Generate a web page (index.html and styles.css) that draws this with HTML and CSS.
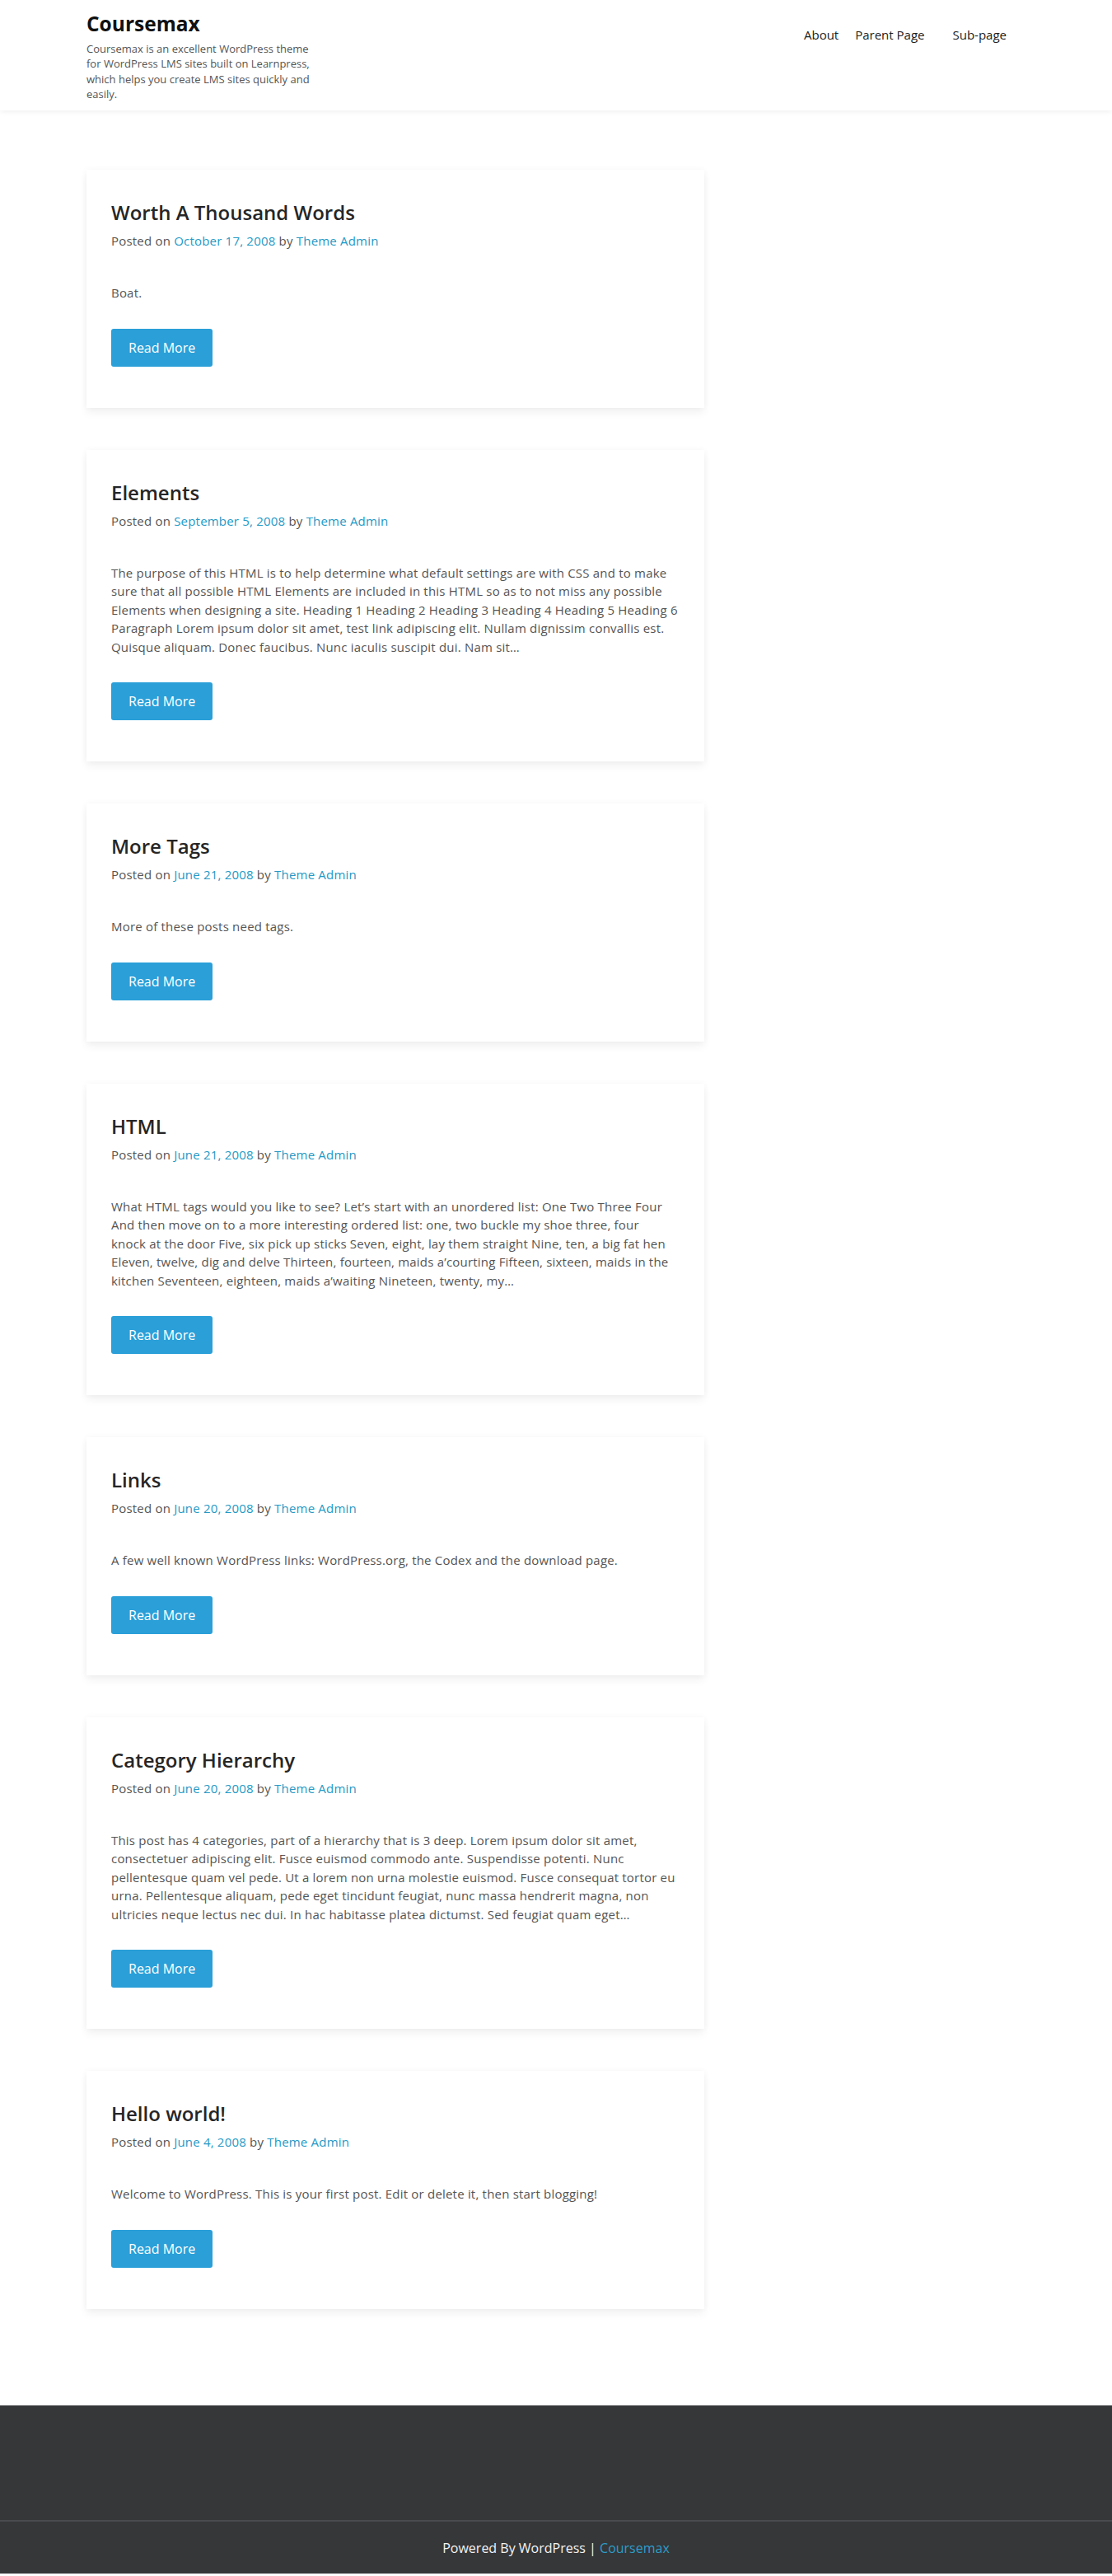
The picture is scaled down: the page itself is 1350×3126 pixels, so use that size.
FILE: index.html
```html
<!DOCTYPE html>
<html lang="en">
<head>
<meta charset="utf-8">
<title>Coursemax</title>
<link rel="stylesheet" href="styles.css">
</head>
<body>
<header class="site-header">
  <div class="container header-inner">
    <div class="branding">
      <h1 class="site-title"><a href="#">Coursemax</a></h1>
      <p class="site-desc">Coursemax is an excellent WordPress theme for WordPress LMS sites built on Learnpress, which helps you create LMS sites quickly and easily.</p>
    </div>
    <nav class="main-nav">
      <ul>
        <li><a href="#">About</a></li>
        <li class="has-sub"><a href="#">Parent Page</a></li>
        <li><a href="#">Sub-page</a></li>
      </ul>
    </nav>
  </div>
</header>

<main class="site-main">
  <div class="container">
    <div class="posts">
      <article class="post-card">
        <h2 class="post-title">Worth A Thousand Words</h2>
        <div class="post-meta">Posted on <a href="#">October 17, 2008</a> by <a href="#">Theme Admin</a></div>
        <p class="post-excerpt">Boat.</p>
        <a class="read-more" href="#">Read More</a>
      </article>

      <article class="post-card">
        <h2 class="post-title">Elements</h2>
        <div class="post-meta">Posted on <a href="#">September 5, 2008</a> by <a href="#">Theme Admin</a></div>
        <p class="post-excerpt">The purpose of this HTML is to help determine what default settings are with CSS and to make sure that all possible HTML Elements are included in this HTML so as to not miss any possible Elements when designing a site. Heading 1 Heading 2 Heading 3 Heading 4 Heading 5 Heading 6 Paragraph Lorem ipsum dolor sit amet, test link adipiscing elit. Nullam dignissim convallis est. Quisque aliquam. Donec faucibus. Nunc iaculis suscipit dui. Nam sit…</p>
        <a class="read-more" href="#">Read More</a>
      </article>

      <article class="post-card">
        <h2 class="post-title">More Tags</h2>
        <div class="post-meta">Posted on <a href="#">June 21, 2008</a> by <a href="#">Theme Admin</a></div>
        <p class="post-excerpt">More of these posts need tags.</p>
        <a class="read-more" href="#">Read More</a>
      </article>

      <article class="post-card">
        <h2 class="post-title">HTML</h2>
        <div class="post-meta">Posted on <a href="#">June 21, 2008</a> by <a href="#">Theme Admin</a></div>
        <p class="post-excerpt">What HTML tags would you like to see? Let’s start with an unordered list: One Two Three Four And then move on to a more interesting ordered list: one, two buckle my shoe three, four<br>knock at the door Five, six pick up sticks Seven, eight, lay them straight Nine, ten, a big fat hen Eleven, twelve, dig and delve Thirteen, fourteen, maids a’courting Fifteen, sixteen, maids in the kitchen Seventeen, eighteen, maids a’waiting Nineteen, twenty, my…</p>
        <a class="read-more" href="#">Read More</a>
      </article>

      <article class="post-card">
        <h2 class="post-title">Links</h2>
        <div class="post-meta">Posted on <a href="#">June 20, 2008</a> by <a href="#">Theme Admin</a></div>
        <p class="post-excerpt">A few well known WordPress links: WordPress.org, the Codex and the download page.</p>
        <a class="read-more" href="#">Read More</a>
      </article>

      <article class="post-card">
        <h2 class="post-title">Category Hierarchy</h2>
        <div class="post-meta">Posted on <a href="#">June 20, 2008</a> by <a href="#">Theme Admin</a></div>
        <p class="post-excerpt">This post has 4 categories, part of a hierarchy that is 3 deep. Lorem ipsum dolor sit amet, consectetuer adipiscing elit. Fusce euismod commodo ante. Suspendisse potenti. Nunc pellentesque quam vel pede. Ut a lorem non urna molestie euismod. Fusce consequat tortor eu urna. Pellentesque aliquam, pede eget tincidunt feugiat, nunc massa hendrerit magna, non ultricies neque lectus nec dui. In hac habitasse platea dictumst. Sed feugiat quam eget…</p>
        <a class="read-more" href="#">Read More</a>
      </article>

      <article class="post-card">
        <h2 class="post-title">Hello world!</h2>
        <div class="post-meta">Posted on <a href="#">June 4, 2008</a> by <a href="#">Theme Admin</a></div>
        <p class="post-excerpt">Welcome to WordPress. This is your first post. Edit or delete it, then start blogging!</p>
        <a class="read-more" href="#">Read More</a>
      </article>
    </div>
  </div>
</main>

<footer class="site-footer">
  <div class="footer-widgets"></div>
  <div class="footer-bottom">
    <p>Powered By WordPress | <a href="#">Coursemax</a></p>
  </div>
</footer>
</body>
</html>
```

FILE: styles.css
```css
* {
  box-sizing: border-box;
}

html, body {
  margin: 0;
  padding: 0;
}

body {
  font-family: "Open Sans", "Noto Sans", "Liberation Sans", sans-serif;
  color: #555;
  background: #fff;
  font-size: 15px;
  line-height: 1.5;
}

a {
  text-decoration: none;
}

.container {
  width: 1170px;
  margin: 0 auto;
  padding: 0 15px;
}

/* Header */
.site-header {
  background: #fff;
  box-shadow: 0 2px 6px rgba(0, 0, 0, 0.06);
  position: relative;
  z-index: 2;
}

.header-inner {
  display: flex;
  justify-content: space-between;
  align-items: flex-start;
  padding-top: 14px;
  padding-bottom: 11px;
  min-height: 134px;
}

.site-title {
  margin: 0 0 6px;
  font-size: 24.5px;
  line-height: 30px;
  font-weight: 700;
}

.site-title a {
  color: #111;
}

.site-desc {
  margin: 0;
  max-width: 290px;
  font-size: 13px;
  line-height: 18.3px;
  color: #555;
}

.main-nav ul {
  list-style: none;
  margin: 16px 13px 0 0;
  padding: 0;
  display: flex;
}

.main-nav a {
  display: block;
  padding: 0 10px;
  font-size: 15px;
  line-height: 24px;
  color: #222;
}

.main-nav .has-sub a {
  padding-right: 24px;
}

/* Posts */
.site-main {
  padding: 72px 0 66px;
}

.posts {
  width: 750px;
}

.post-card {
  background: #fff;
  padding: 37px 30px 50px;
  margin-bottom: 51px;
  box-shadow: 0 0 8px rgba(0, 0, 0, 0.04), 0 6px 10px rgba(0, 0, 0, 0.05);
}

.post-title {
  margin: 0 0 8px;
  font-size: 24px;
  line-height: 29px;
  font-weight: 600;
  color: #262626;
}

.post-meta {
  font-size: 15px;
  line-height: 24px;
  letter-spacing: 0.2px;
  color: #555;
}

.post-meta a {
  color: #2499c6;
}

.post-excerpt {
  margin: 40px 0 32px;
  font-size: 15px;
  line-height: 22.5px;
  letter-spacing: 0.2px;
  color: #555;
}

.read-more {
  display: inline-block;
  padding: 12px 21px;
  font-size: 16px;
  line-height: 22px;
  color: #fff;
  background: #2a9fd8;
  border-radius: 3px;
}

/* Footer */
.site-footer {
  background: #363739;
  color: #f2f2f2;
}

.footer-widgets {
  height: 141px;
  border-bottom: 2px solid #4a4b4e;
}

.footer-bottom {
  text-align: center;
  padding: 20px 0 19px;
}

.footer-bottom p {
  margin: 0;
  font-size: 16px;
  line-height: 24px;
}

.footer-bottom a {
  color: #2d9cc8;
}
```
